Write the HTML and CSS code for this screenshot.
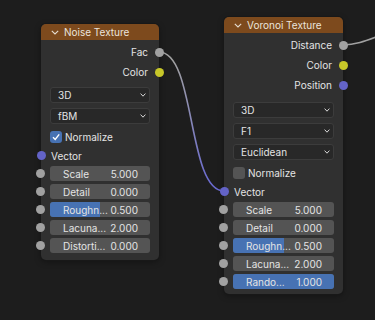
FILE: index.html
```html
<!DOCTYPE html>
<html lang="en">
<head>
    <meta charset="UTF-8">
    <meta name="viewport" content="width=device-width, initial-scale=1.0">
    <title>Shader Nodes</title>
    <link rel="stylesheet" href="styles.css">
</head>
<body>
    <div class="canvas">
        <svg class="links" width="375" height="320" viewBox="0 0 375 320">
            <defs>
                <linearGradient id="fac-link" gradientUnits="userSpaceOnUse" x1="0" y1="60" x2="0" y2="185">
                    <stop offset="0" stop-color="#a1a1a1"/>
                    <stop offset="1" stop-color="#6a6ad0"/>
                </linearGradient>
            </defs>
            <path d="M159 52 C196 52 187 191 224 191" stroke="url(#fac-link)"/>
            <path d="M343 45 C366 45 382 31 412 27" stroke="#a1a1a1"/>
        </svg>

        <!-- Noise Texture -->
        <div class="node noise">
            <div class="node-header">
                <svg class="collapse" width="8" height="5" viewBox="0 0 8 5"><polyline points="0.8,0.8 4,4 7.2,0.8"/></svg>
                <span>Noise Texture</span>
            </div>
            <div class="node-body">
                <div class="row output"><span>Fac</span><i class="socket float"></i></div>
                <div class="row output"><span>Color</span><i class="socket color"></i></div>

                <div class="dropdown first"><span>3D</span><svg width="6" height="4" viewBox="0 0 6 4"><polyline points="0.6,0.6 3,3.2 5.4,0.6"/></svg></div>
                <div class="dropdown"><span>fBM</span><svg width="6" height="4" viewBox="0 0 6 4"><polyline points="0.6,0.6 3,3.2 5.4,0.6"/></svg></div>

                <div class="row check">
                    <span class="checkbox on"><svg width="10" height="10" viewBox="0 0 10 10"><polyline points="2,5.2 4.2,7.4 8.2,2.4"/></svg></span>
                    <span>Normalize</span>
                </div>
                <div class="row input"><i class="socket vector"></i><span>Vector</span></div>

                <div class="value first"><i class="socket float"></i><span>Scale</span><span>5.000</span></div>
                <div class="value"><i class="socket float"></i><span>Detail</span><span>0.000</span></div>
                <div class="value"><i class="socket float"></i><b class="fill" style="width: 50%"></b><span>Roughn...</span><span>0.500</span></div>
                <div class="value"><i class="socket float"></i><span>Lacuna...</span><span>2.000</span></div>
                <div class="value"><i class="socket float"></i><span>Distorti...</span><span>0.000</span></div>
            </div>
        </div>

        <!-- Voronoi Texture -->
        <div class="node voronoi">
            <div class="node-header">
                <svg class="collapse" width="8" height="5" viewBox="0 0 8 5"><polyline points="0.8,0.8 4,4 7.2,0.8"/></svg>
                <span>Voronoi Texture</span>
            </div>
            <div class="node-body">
                <div class="row output"><span>Distance</span><i class="socket float"></i></div>
                <div class="row output"><span>Color</span><i class="socket color"></i></div>
                <div class="row output"><span>Position</span><i class="socket vector"></i></div>

                <div class="dropdown first"><span>3D</span><svg width="6" height="4" viewBox="0 0 6 4"><polyline points="0.6,0.6 3,3.2 5.4,0.6"/></svg></div>
                <div class="dropdown"><span>F1</span><svg width="6" height="4" viewBox="0 0 6 4"><polyline points="0.6,0.6 3,3.2 5.4,0.6"/></svg></div>
                <div class="dropdown"><span>Euclidean</span><svg width="6" height="4" viewBox="0 0 6 4"><polyline points="0.6,0.6 3,3.2 5.4,0.6"/></svg></div>

                <div class="row check">
                    <span class="checkbox"></span>
                    <span>Normalize</span>
                </div>
                <div class="row input"><i class="socket vector"></i><span>Vector</span></div>

                <div class="value first"><i class="socket float"></i><span>Scale</span><span>5.000</span></div>
                <div class="value"><i class="socket float"></i><span>Detail</span><span>0.000</span></div>
                <div class="value"><i class="socket float"></i><b class="fill" style="width: 50%"></b><span>Roughn...</span><span>0.500</span></div>
                <div class="value"><i class="socket float"></i><span>Lacuna...</span><span>2.000</span></div>
                <div class="value"><i class="socket float"></i><b class="fill full" style="width: 100%"></b><span>Rando...</span><span>1.000</span></div>
            </div>
        </div>
    </div>
</body>
</html>
```

FILE: styles.css
```css
body {
    margin: 0;
    background: #1d1d1d;
    font-family: Inter, "DejaVu Sans", sans-serif;
    font-size: 10px;
    color: #e4e4e4;
}

.canvas {
    position: relative;
    width: 375px;
    height: 320px;
    overflow: hidden;
}

.links {
    position: absolute;
    left: 0;
    top: 0;
}

.links path {
    fill: none;
    stroke-width: 1.6;
}

.node {
    position: absolute;
    width: 118px;
    background: #303030;
    border-radius: 5px;
    box-shadow: 0 0 0 1px #181818, 0 2px 6px rgba(0, 0, 0, 0.35);
}

.noise {
    left: 41px;
    top: 24px;
}

.voronoi {
    left: 224px;
    top: 17px;
    width: 119px;
}

.node-header {
    height: 16px;
    background: #7d4a1d;
    border-radius: 5px 5px 0 0;
    display: flex;
    align-items: center;
    padding-left: 10px;
    color: #ebe4dc;
}

.collapse {
    margin-right: 5px;
}

.collapse polyline {
    fill: none;
    stroke: #e6ddd2;
    stroke-width: 1.1;
}

.node-body {
    padding: 2px 0 7px;
    display: flex;
    flex-direction: column;
}

.voronoi .node-body {
    padding-bottom: 5px;
}

.row {
    position: relative;
    display: flex;
    align-items: center;
    height: 20px;
}

.row.output {
    justify-content: flex-end;
    padding-right: 11px;
}

.row.input {
    height: 19px;
    padding-left: 10px;
}

.row.check {
    height: 19px;
    margin-top: 3px;
    padding-left: 9px;
}

.socket {
    position: absolute;
    top: 50%;
    width: 9px;
    height: 9px;
    margin-top: -4.5px;
    border-radius: 50%;
}

.output .socket {
    right: -5px;
}

.value .socket {
    left: -14px;
}

.input .socket {
    left: -4px;
}

.socket.float {
    background: #a1a1a1;
}

.socket.color {
    background: #c7c729;
}

.socket.vector {
    background: #6363c7;
}

.dropdown {
    display: flex;
    align-items: center;
    justify-content: space-between;
    height: 16px;
    margin: 5px 9px 0;
    padding: 0 3px 0 7px;
    box-sizing: border-box;
    background: #282828;
    border: 1px solid #3c3c3c;
    border-radius: 3px;
}

.voronoi .dropdown.first {
    margin-top: 7px;
}

.dropdown svg polyline {
    fill: none;
    stroke: #d8d8d8;
    stroke-width: 1;
}

.checkbox {
    width: 12px;
    height: 12px;
    margin-right: 3px;
    border-radius: 3px;
    background: #545454;
    display: flex;
    align-items: center;
    justify-content: center;
}

.checkbox.on {
    background: #4772b3;
}

.checkbox polyline {
    fill: none;
    stroke: #ffffff;
    stroke-width: 1.4;
}

.value {
    position: relative;
    display: flex;
    justify-content: space-between;
    align-items: center;
    height: 15px;
    margin: 3px 9px 0;
    padding: 0 12px 0 13px;
    background: #545454;
    border-radius: 3px;
}

.value.first {
    margin-top: 1px;
}

.value span {
    position: relative;
}

.fill {
    position: absolute;
    left: 0;
    top: 0;
    bottom: 0;
    background: #4772b3;
    border-radius: 3px 0 0 3px;
}

.fill.full {
    border-radius: 3px;
}
```
